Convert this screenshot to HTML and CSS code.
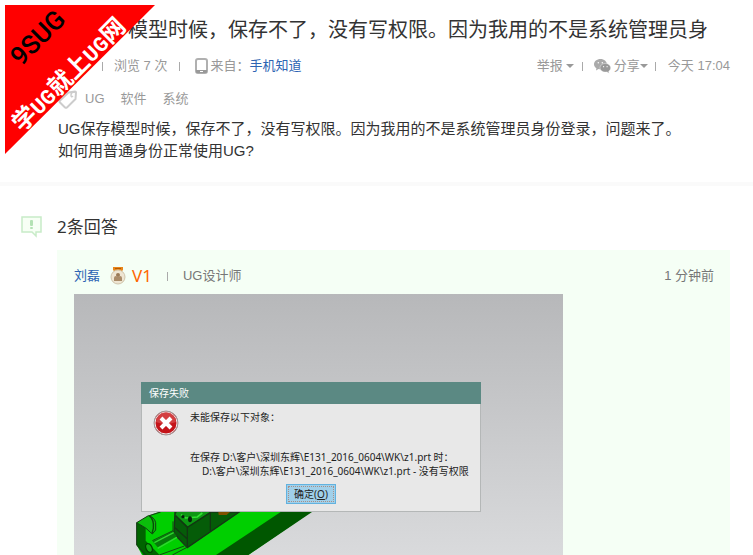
FILE: index.html
```html
<!DOCTYPE html>
<html lang="zh-CN">
<head>
    <meta charset="UTF-8">
    <meta name="viewport" content="width=device-width, initial-scale=1.0">
    <title>UG模型保存不了</title>
    <link rel="stylesheet" href="styles.css">
</head>
<body>

    <!-- corner ribbon -->
    <svg class="ribbon" width="150" height="150" viewBox="0 0 150 150">
        <polygon points="0,0 150,0 0,149" fill="#f00"/>
        <text class="ribbon-name" transform="translate(16 62) rotate(-45)">9SUG</text>
        <text class="ribbon-slogan" transform="translate(17 128) rotate(-45)">学<tspan class="latin">UG</tspan>就上<tspan class="latin">UG</tspan>网</text>
    </svg>

    <div class="question">
        <h1>模型时候，保存不了，没有写权限。因为我用的不是系统管理员身</h1>
        <div class="meta">
            <div class="meta-left">
                <i class="sep"></i>
                <span class="views">浏览 7 次</span>
                <i class="sep"></i>
                <span class="source">
                    <svg width="13" height="16" viewBox="0 0 13 16">
                        <rect x="1" y="1" width="11" height="14" rx="2" fill="#fff" stroke="#b0b0b0" stroke-width="2"/>
                        <path d="M1 12h11v2q0 1-1 1H2q-1 0-1-1z" fill="#999"/>
                        <rect x="5" y="13" width="3" height="1" fill="#fff"/>
                    </svg>
                    来自：<a href="#">手机知道</a>
                </span>
            </div>
            <div class="meta-right">
                <button class="drop">举报<i class="arrow"></i></button>
                <i class="sep"></i>
                <button class="drop share">
                    <svg width="17" height="16" viewBox="0 0 17 16">
                        <path d="M6.500 1C2.900 1 0 3.300 0 6.200c0 1.600 1 3 2.400 4L2 12.400l2.500-1.300c.6.200 1.300.2 2 .2 3.600 0 6.400-2.200 6.400-5S10.100 1 6.500 1z" fill="#aaa"/>
                        <path d="M11.300 5.400c-3 0-5.300 2-5.300 4.400s2.300 4.300 5.300 4.300c.6 0 1.200-.1 1.700-.2l2.200 1.300-.5-1.900c1.300-.8 2-2 2-3.500 0-2.400-2.400-4.400-5.400-4.400z" fill="#999" stroke="#fff" stroke-width=".4"/>
                        <circle cx="4.300" cy="4.700" r=".7" fill="#fff"/><circle cx="8.300" cy="4.700" r=".7" fill="#fff"/>
                        <circle cx="9.600" cy="8.700" r=".6" fill="#fff"/><circle cx="13.100" cy="8.700" r=".6" fill="#fff"/>
                    </svg>
                    <span>分享</span><i class="arrow"></i>
                </button>
                <i class="sep"></i>
                <span class="date">今天 17:04</span>
            </div>
        </div>
        <div class="tags">
            <svg width="19" height="19" viewBox="0 0 19 19" fill="none" stroke="#ccc" stroke-width="2">
                <path d="M10.500 2.500L17 1.500q1 0 1 1L17.500 9 9 17.500q-1 .7-2 0L2 12.500q-1-1 0-2z"/>
                <path d="M17 2q-4 0-4 3t2 1" stroke-width="1.500"/>
            </svg>
            <a href="#">UG</a>
            <a href="#">软件</a>
            <a href="#">系统</a>
        </div>
        <p>UG保存模型时候，保存不了，没有写权限。因为我用的不是系统管理员身份登录，问题来了。<br>如何用普通身份正常使用UG?</p>
    </div>

    <div class="answers">
        <div class="answers-title">
            <svg width="21" height="22" viewBox="0 0 21 22">
                <path d="M1 1h19v15h-5v4l-4-4H1z" fill="#f7fff5" stroke="#c8ebc8" stroke-width="1.500"/>
                <rect x="9" y="4" width="3" height="6" rx="1" fill="#b4e2b4"/>
                <rect x="9" y="11" width="3" height="2" rx="1" fill="#b4e2b4"/>
            </svg>
            <h2>2条回答</h2>
        </div>

        <div class="answer">
            <div class="author">
                <a href="#">刘磊</a>
                <svg width="16" height="18" viewBox="0 0 16 18">
                    <path d="M3 0h10v3l-2 2H5L3 3z" fill="#e8861a"/>
                    <path d="M5 1h6v1H5z" fill="#b85a00"/>
                    <circle cx="8" cy="10" r="7" fill="#eee5d2" stroke="#cfc4ab"/>
                    <circle cx="8" cy="8" r="2" fill="#9a7a56"/>
                    <path d="M4 14v-3q0-2 2-2l2 1 2-1q2 0 2 2v3z" fill="#a98b68"/>
                </svg>
                <span class="level">V1</span>
                <i class="sep"></i>
                <span class="job">UG设计师</span>
                <span class="ago">1 分钟前</span>
            </div>

            <div class="shot">
                <!-- part behind the dialog -->
                <svg class="model" width="300" height="85" viewBox="0 0 900 255">
                    <path d="M80 158l38-22 34-12H606L415 255H96L80 225z" fill="#00cf00"/>
                    <path d="M606 126L415 255H318L512 126z" fill="#005700"/>
                    <path d="M80 158l27 16v38l42 43H100L80 225z" fill="#006400"/>
                    <path d="M80 158l35-21q18 4 22 21v22l-10 12-20-18z" fill="#0bbd0b" stroke="#143c14" stroke-width="3"/>
                    <path d="M118 137q15 12 12 38l-4 15" fill="none" stroke="#074b07" stroke-width="4"/>
                    <path d="M195 126H388L232 233l-40-42z" fill="#055c08" stroke="#173417" stroke-width="4"/>
                    <path d="M200 126h100l-65 44-38-35z" fill="#0d9613"/>
                    <path d="M232 171v62M301 128v55M197 137l35 35 70-45M232 207l-37-34" fill="none" stroke="#123612" stroke-width="4"/>
                    <path d="M325 126h35l-10 9h-24z" fill="#805000"/>
                    <path d="M213 134l14 10 35-3 15-12" fill="none" stroke="#30e130" stroke-width="5"/>
                    <ellipse cx="240" cy="148" rx="6" ry="9" fill="#06220a"/>
                    <circle cx="219" cy="140" r="5" fill="#06220a"/>
                    <path d="M128 214l61-31 12 16-58 33z" fill="#067a0a"/>
                    <path d="M133 218l58-30M143 235l58-33" fill="none" stroke="#2fd52f" stroke-width="4"/>
                    <path d="M127 212l62-30v-28M189 182l43 50M148 255l75-27M187 255l44-23" fill="none" stroke="#124912" stroke-width="3"/>
                    <ellipse cx="117" cy="234" rx="9" ry="14" transform="rotate(-25 117 234)" fill="#12a812" stroke="#013f01" stroke-width="4"/>
                    <path d="M118 137l34-11M80 158v67l28 30" fill="none" stroke="#173417" stroke-width="3"/>
                </svg>

                <div class="dialog">
                    <div class="dialog-title">保存失败</div>
                    <div class="dialog-body">
                        <svg width="26" height="26" viewBox="0 0 26 26">
                            <circle cx="13" cy="13" r="12" fill="#c4141a" stroke="#999" stroke-width="1"/>
                            <circle cx="13" cy="13" r="11" fill="none" stroke="#eee" stroke-width="1"/>
                            <path d="M3 12a10 10 0 0 1 20 0q-10 4-20 0z" fill="#dd5b5b" opacity=".6"/>
                            <path d="M8 8l10 10M18 8L8 18" stroke="#fff" stroke-width="4"/>
                        </svg>
                        <div class="dialog-text">
                            <div>未能保存以下对象：</div>
                            <div class="path">在保存 D:\客户\深圳东辉\E131_2016_0604\WK\z1.prt 时：</div>
                            <div class="indent">D:\客户\深圳东辉\E131_2016_0604\WK\z1.prt - 没有写权限</div>
                        </div>
                    </div>
                    <button class="ok"><span>确定(<u>O</u>)</span></button>
                </div>
            </div>
        </div>
    </div>

</body>
</html>
```

FILE: styles.css
```css
* {
    box-sizing: border-box;
}
body {
    margin: 0;
    height: 100vh;
    overflow: hidden;
    display: flex;
    flex-direction: column;
    font-family: "Liberation Sans", "Noto Sans CJK SC", sans-serif;
    font-size: 13px;
    color: #333;
    background: #fff;
}
a {
    color: #2d64b3;
    text-decoration: none;
}
button {
    font: inherit;
    color: inherit;
    border: none;
    background: none;
    padding: 0;
    cursor: pointer;
}
svg {
    flex: none;
}

/* ribbon */
.ribbon {
    position: absolute;
    left: 5px;
    top: 5px;
    overflow: visible;
}
.ribbon-name {
    font-family: Roboto, sans-serif;
    font-size: 26px;
    font-weight: 500;
}
.ribbon-slogan {
    font-family: "Noto Sans CJK SC", sans-serif;
    font-size: 24px;
    font-weight: bold;
    fill: #fff;
}
.ribbon-slogan .latin {
    font-family: "Liberation Sans Narrow", "Liberation Mono", monospace;
    font-size: 22px;
}

/* question */
.question {
    padding: 15px 23px 20px 58px;
    border-bottom: 4px solid #fafafa;
}
h1 {
    margin: 0;
    padding-left: 70px;
    font-size: 20px;
    font-weight: normal;
    line-height: 30px;
    white-space: nowrap;
}
.meta {
    display: flex;
    justify-content: space-between;
    margin-top: 10px;
    padding-left: 44px;
    line-height: 22px;
    color: #999;
}
.meta-left, .meta-right, .source, .drop {
    display: flex;
    align-items: center;
}
.sep {
    width: 1px;
    height: 9px;
    background: #aaa;
}
.views {
    margin: 0 12px 0 11px;
}
.source {
    margin-left: 15px;
}
.source svg {
    margin-right: 2px;
}
.arrow {
    border: 4px solid transparent;
    border-top-color: #999;
    border-bottom: none;
    margin: 0 8px 0 3px;
}
.share {
    margin-left: 11px;
}
.share svg {
    margin-right: 3px;
}
.share .arrow {
    margin: 0 7px 0 0;
}
.date {
    margin-left: 12px;
}
.tags {
    display: flex;
    align-items: center;
    gap: 16px;
    margin-top: 11px;
    line-height: 22px;
}
.tags svg {
    margin-right: -8px;
}
.tags a {
    color: #999;
}
.question p {
    margin: 8px 0 0;
    font-size: 15px;
    line-height: 22px;
}

/* answers */
.answers {
    flex: 1;
    display: flex;
    flex-direction: column;
    padding: 26px 23px 0 21px;
}
.answers-title {
    display: flex;
    align-items: center;
    gap: 15px;
}
h2 {
    margin: 0;
    font-family: "Noto Sans", "Noto Sans CJK SC", sans-serif;
    font-size: 17px;
    font-weight: normal;
    line-height: 30px;
}
.answer {
    flex: 1;
    display: flex;
    flex-direction: column;
    margin: 8px 0 0 36px;
    padding: 14px 16px 0 17px;
    background: #f5fff5;
}
.author {
    display: flex;
    align-items: center;
    margin-bottom: 6px;
    line-height: 24px;
    color: #777;
}
.author svg {
    margin: 0 6px 0 10px;
}
.level {
    font-family: "Noto Sans", sans-serif;
    font-size: 17px;
    color: #f60;
}
.author .sep {
    margin: 0 15px;
}
.ago {
    margin-left: auto;
}

/* posted screenshot */
.shot {
    position: relative;
    flex: 1;
    max-width: 489px;
    padding: 88px 0 0 67px;
    background: linear-gradient(#b7b8ba, #d9dadc);
}
.model {
    position: absolute;
    left: 36px;
    top: 176px;
}
.dialog {
    position: relative;
    width: 340px;
    padding-bottom: 7px;
    background: #e8e8e8;
    border: 1px solid #b4b7b7;
    font-family: "Noto Sans", "Noto Sans CJK SC", sans-serif;
    font-size: 10px;
    line-height: 14px;
    color: #222;
}
.dialog-title {
    margin: -1px -1px 0;
    padding: 0 8px;
    line-height: 22px;
    color: #fff;
    background: #5b8983;
}
.dialog-body {
    display: flex;
    gap: 11px;
    padding: 6px 0 0 11px;
}
.dialog-text {
    white-space: nowrap;
}
.path {
    margin-top: 26px;
}
.indent {
    padding-left: 12px;
}
.ok {
    display: block;
    width: 50px;
    height: 20px;
    margin: 6px 0 0 144px;
    padding: 1px;
    background: #a0d0ea;
    border: 1px solid #62b2df;
}
.ok span {
    display: block;
    line-height: 14px;
    border: 1px dotted #a98f86;
}
```
